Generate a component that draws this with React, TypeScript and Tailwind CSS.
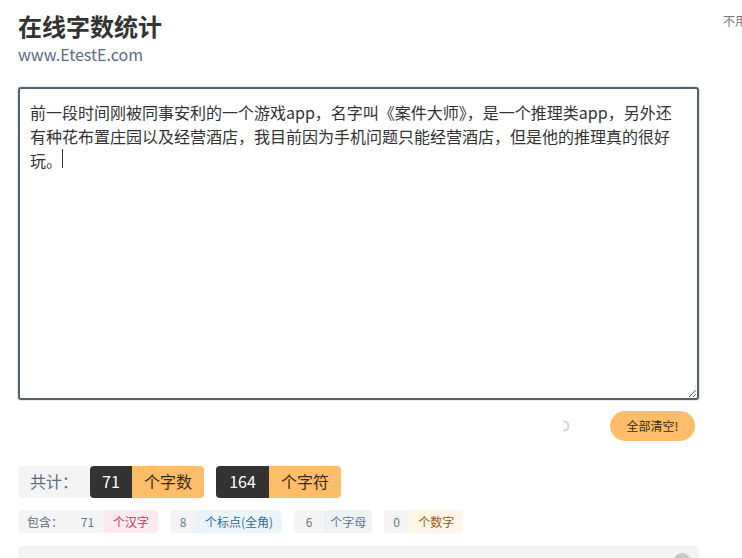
import React from 'react';

const text =
  '前一段时间刚被同事安利的一个游戏app，名字叫《案件大师》，是一个推理类app，另外还有种花布置庄园以及经营酒店，我目前因为手机问题只能经营酒店，但是他的推理真的很好玩。';

const breakdown = [
  { num: '71', label: '个汉字', cls: 'px-[9px] bg-[#fde9ee] text-[#c23b5a]', w: 'w-[33px]' },
  { num: '8', label: '个标点(全角)', cls: 'px-[9px] bg-[#eaf4fb] text-[#2f6c9c]', w: 'w-[26px]' },
  { num: '6', label: '个字母', cls: 'px-[6px] bg-[#eff2f5] text-[#66768a]', w: 'w-[30px]' },
  { num: '0', label: '个数字', cls: 'px-[9px] bg-[#fff4e6] text-[#9a5a14]', w: 'w-[25px]' },
];

const App: React.FC = () => {
  return (
    <div
      className="flex h-[558px] w-[742px] overflow-hidden bg-white text-[#333]"
      style={{ fontFamily: '"Noto Sans CJK SC", "Noto Sans", sans-serif' }}
    >
      <div className="ml-[18px] w-[681px] shrink-0">
        {/* header */}
        <h1 className="mt-[11px] text-[24px] font-bold leading-[30px] text-[#333]">在线字数统计</h1>
        <div className="mt-[2px] text-[16px] leading-[22px] text-[#5b6b86]">www.EtestE.com</div>

        {/* editor */}
        <div className="relative mt-[22px]">
          <textarea
            readOnly
            value={text}
            className="block h-[313px] w-[681px] rounded-[3px] border-2 border-[#4f646c] py-[11px] pl-[10px] pr-[14px] text-[16px] leading-[24px] text-[#333] shadow-[0_0_0_1px_#e2e8ea] outline-none"
          />
          {/* caret */}
          <span className="absolute left-[44px] top-[62px] h-[19px] w-px bg-[#333]" />
        </div>

        <div className="mt-[11px] flex items-center justify-end pr-[4px]">
          <svg width="12" height="12" viewBox="0 0 12 12" className="mr-[40px]">
            <path d="M6 1.5 A4.5 4.5 0 0 1 6 10.5" fill="none" stroke="#d4d4d4" strokeWidth="2" strokeLinecap="round" />
          </svg>
          <button className="h-[30px] w-[85px] rounded-full bg-[#ffbd69] text-[12px] text-[#3a2a14]">全部清空!</button>
        </div>

        {/* totals */}
        <div className="mt-[25px] flex items-center text-[16px] leading-[31px]">
          <span className="h-[32px] w-[72px] rounded-l-[4px] bg-[#f4f4f5] pl-[12px] text-[#5d6a80]">共计：</span>
          <span className="h-[32px] w-[42px] rounded-l-[4px] bg-[#333] text-center text-white">71</span>
          <span className="h-[32px] w-[72px] rounded-r-[4px] bg-[#ffbd69] text-center text-[#3a2a14]">个字数</span>
          <span className="ml-[12px] h-[32px] w-[53px] rounded-l-[4px] bg-[#333] text-center text-white">164</span>
          <span className="h-[32px] w-[72px] rounded-r-[4px] bg-[#ffbd69] text-center text-[#3a2a14]">个字符</span>
        </div>

        {/* breakdown */}
        <div className="mt-[12px] flex items-center text-[12px] leading-[23px]">
          <span className="h-[23px] w-[53px] rounded-l-[4px] bg-[#f4f4f5] pl-[9px] text-[#5d6a80]">包含：</span>
          {breakdown.map((b, i) => (
            <span key={b.label} className={`flex ${i > 0 ? 'ml-[12px]' : ''}`}>
              <span className={`h-[23px] ${b.w} ${i > 0 ? 'rounded-l-[4px]' : ''} bg-[#f4f4f5] text-center text-[#66768a]`}>
                {b.num}
              </span>
              <span className={`h-[23px] rounded-r-[4px] ${b.cls}`}>{b.label}</span>
            </span>
          ))}
        </div>

        {/* next panel */}
        <div className="relative mt-[13px] h-[40px] rounded-[5px] bg-[#f3f3f3]">
          <span className="absolute right-[8px] top-[7px] h-[18px] w-[18px] rounded-full bg-[#c8c8c8]" />
        </div>
      </div>

      {/* side */}
      <div className="ml-[24px] mt-[13px] whitespace-nowrap text-[12px] leading-[16px] text-[#777]">不用登录，免费统计</div>
    </div>
  );
};

export default App;
